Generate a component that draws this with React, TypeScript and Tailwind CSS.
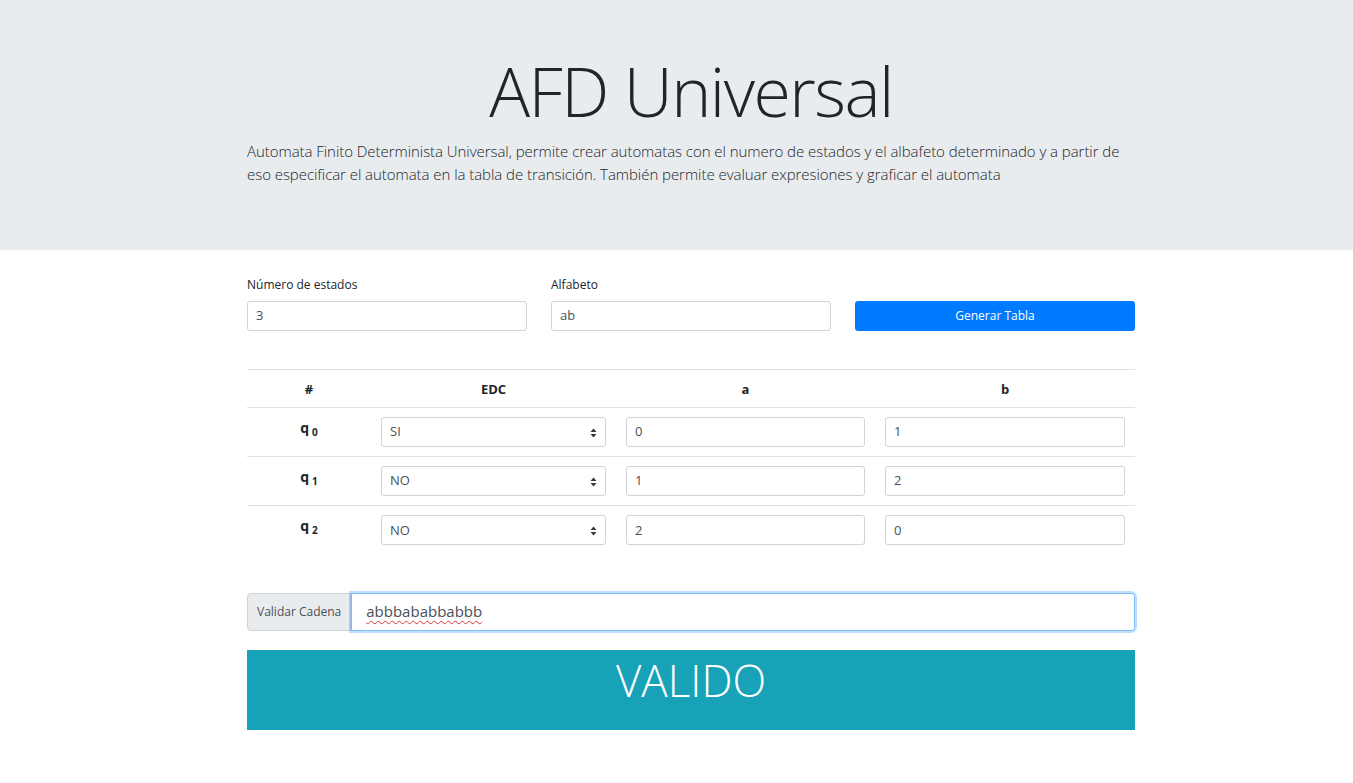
import React from "react";

const font = { fontFamily: '"Open Sans", "Noto Sans", sans-serif' };

function Sel({ v }: { v: string }) {
  return (
    <div className="relative h-[30px] w-full rounded-[3px] border border-[#ced4da] bg-white flex items-center px-2 text-[13px] text-[#495057]">
      <span>{v}</span>
      <svg className="absolute right-[8px] top-[10px]" width="7" height="10" viewBox="0 0 7 10">
        <path d="M3.5 0.5 L6.5 4 L0.5 4 Z" fill="#343a40" />
        <path d="M3.5 9.5 L6.5 6 L0.5 6 Z" fill="#343a40" />
      </svg>
    </div>
  );
}

function Inp({ v }: { v: string }) {
  return (
    <div className="h-[30px] w-full rounded-[3px] border border-[#ced4da] bg-white flex items-center px-2 text-[13px] text-[#495057]">
      {v}
    </div>
  );
}

export default function App() {
  const rows = [
    { q: "0", edc: "SI", a: "0", b: "1" },
    { q: "1", edc: "NO", a: "1", b: "2" },
    { q: "2", edc: "NO", a: "2", b: "0" },
  ];
  return (
    <div style={font} className="min-h-[783px] bg-white text-[#212529]">
      <div className="h-[250px] bg-[#e9ecef] pt-[50px]">
        <div className="ml-[247px] w-[888px]">
          <h1 className="text-center text-[68px] font-light leading-[82px] tracking-[-1.5px]">AFD Universal</h1>
          <p className="mt-[8px] text-[15px] font-light leading-[23px] tracking-[-0.05px] text-[#212529]">
            <span className="block whitespace-nowrap">Automata Finito Determinista Universal, permite crear automatas con el numero de estados y el albafeto determinado y a partir de</span>
            <span className="block whitespace-nowrap">eso especificar el automata en la tabla de transición. También permite evaluar expresiones y graficar el automata</span>
          </p>
        </div>
      </div>

      <div className="ml-[247px] w-[888px]">
        <div className="mt-[26px] flex items-end gap-[24px]">
          <div className="w-[280px]">
            <label className="block text-[12px] leading-[18px] mb-[7px]">Número de estados</label>
            <Inp v="3" />
          </div>
          <div className="w-[280px]">
            <label className="block text-[12px] leading-[18px] mb-[7px]">Alfabeto</label>
            <Inp v="ab" />
          </div>
          <button className="h-[30px] w-[280px] rounded-[3px] bg-[#007bff] text-[12px] text-white">Generar Tabla</button>
        </div>

        <table className="mt-[38px] w-full border-collapse text-[13px]">
          <thead>
            <tr className="border-t border-[#dee2e6] border-b border-b-[#dee2e6]">
              <th className="w-[124px] h-[38px] pt-[2px] font-bold text-center">#</th>
              <th className="w-[245px] pt-[2px] font-bold text-center">EDC</th>
              <th className="w-[259px] pt-[2px] font-bold text-center">a</th>
              <th className="w-[260px] pt-[2px] font-bold text-center">b</th>
            </tr>
          </thead>
          <tbody>
            {rows.map((r, i) => (
              <tr key={i} className={i > 0 ? "border-t border-[#dee2e6]" : ""}>
                <td className="h-[49px] text-center align-top pt-[9px]">
                  <span className="font-bold text-[14px]">q</span>
                  <span className="relative top-[3px] ml-[3px] font-bold text-[10px]">{r.q}</span>
                </td>
                <td className="px-[10px]"><Sel v={r.edc} /></td>
                <td className="px-[10px]"><Inp v={r.a} /></td>
                <td className="px-[10px]"><Inp v={r.b} /></td>
              </tr>
            ))}
          </tbody>
        </table>

        <div className="mt-[38px] flex h-[38px]">
          <div className="flex items-center rounded-l-[4px] border border-[#ced4da] bg-[#e9ecef] px-[9px] text-[12px] text-[#495057]">
            Validar Cadena
          </div>
          <div className="flex flex-1 items-center rounded-r-[4px] border border-[#80bdff] bg-white px-[14px] text-[15px] text-[#495057] shadow-[0_0_0_2px_rgba(0,123,255,0.25)]">
            <span className="underline decoration-wavy decoration-[#e03030] decoration-[1px] underline-offset-[3px]">abbbababbabbb</span>
          </div>
        </div>

        <div className="mt-[19px] flex h-[80px] justify-center bg-[#17a2b8]">
          <span className="text-[44px] font-light leading-[60px] text-white">VALIDO</span>
        </div>
      </div>
    </div>
  );
}
